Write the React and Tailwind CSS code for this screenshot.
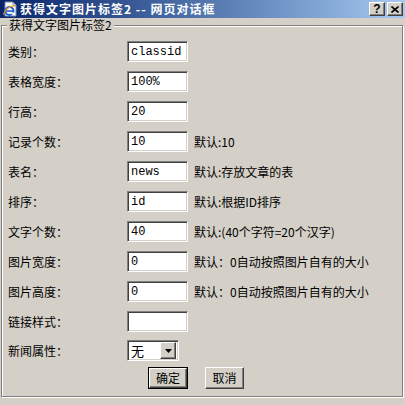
import React from "react";

const sunken =
  "bg-white border border-t-[#808080] border-l-[#808080] border-b-white border-r-white shadow-[inset_1px_1px_0_#404040,inset_-1px_-1px_0_#d4d0c8]";
const raised =
  "bg-[#d4d0c8] border border-t-white border-l-white border-b-[#404040] border-r-[#404040] shadow-[inset_-1px_-1px_0_#808080]";

function IeIcon() {
  return (
    <svg width="16" height="16" viewBox="0 0 16 16">
      <path d="M3 1h8l3 3v11H3z" fill="#fff" stroke="#7a8aa8" strokeWidth="1" />
      <path d="M11 1v3h3" fill="none" stroke="#7a8aa8" strokeWidth="1" />
      <circle cx="7.5" cy="10" r="4" fill="none" stroke="#1f5fd0" strokeWidth="2" />
      <path d="M4 10h7" stroke="#1f5fd0" strokeWidth="1.6" />
      <path d="M9.5 12.5h3" stroke="#fff" strokeWidth="2" />
      <path d="M1.5 13.5C3 8 9 4 13.5 5" fill="none" stroke="#e8a020" strokeWidth="1.2" />
    </svg>
  );
}

function TitleBar() {
  return (
    <div className="h-[18px] flex items-center bg-linear-to-r from-[#0a246a] to-[#a6caf0] pl-[2px] pr-[2px]">
      <IeIcon />
      <span className="ml-[2px] text-white font-bold text-[12px] leading-[14px] tracking-[1px] whitespace-nowrap">
        获得文字图片标签2 -- 网页对话框
      </span>
      <div className="ml-auto flex gap-[2px]">
        <div className={`${raised} w-[16px] h-[14px] flex items-center justify-center`}>
          <span className="font-bold text-[12px] leading-none font-['Liberation_Sans',sans-serif] text-black">?</span>
        </div>
        <div className={`${raised} w-[16px] h-[14px] flex items-center justify-center`}>
          <svg width="8" height="7" viewBox="0 0 8 7">
            <path d="M0.5 0.5L7.5 6.5M7.5 0.5L0.5 6.5" stroke="#000" strokeWidth="1.6" />
          </svg>
        </div>
      </div>
    </div>
  );
}

function Field({ value }) {
  return (
    <div
      className={`${sunken} w-[61px] h-[21px] flex items-center pl-[3px] font-['Liberation_Mono',monospace] text-[12px] leading-none text-black`}
    >
      {value}
    </div>
  );
}

const rows = [
  ["类别：", "classid", ""],
  ["表格宽度：", "100%", ""],
  ["行高：", "20", ""],
  ["记录个数：", "10", "默认:10"],
  ["表名：", "news", "默认:存放文章的表"],
  ["排序：", "id", "默认:根据ID排序"],
  ["文字个数：", "40", "默认:(40个字符=20个汉字)"],
  ["图片宽度：", "0", "默认：0自动按照图片自有的大小"],
  ["图片高度：", "0", "默认：0自动按照图片自有的大小"],
  ["链接样式：", "", ""],
];

export default function App() {
  return (
    <div className="w-[405px] h-[405px] bg-[#d4d0c8] font-['SimSun','Noto_Sans_CJK_SC',sans-serif] text-[12px] text-black overflow-hidden">
      <TitleBar />
      <div className="pt-[7px] pl-[1px]">
        <div className="relative w-[402px] h-[372px] border border-[#808080] shadow-[1px_1px_0_#fff,inset_1px_1px_0_#fff] pt-[15px] pl-[6px]">
          <span className="absolute left-[5px] -top-[8px] px-[2px] bg-[#d4d0c8] leading-[14px] whitespace-nowrap">
            获得文字图片标签2
          </span>
          <div className="flex flex-col gap-[9px]">
            {rows.map(([label, value, hint]) => (
              <div key={label} className="flex items-center h-[21px]">
                <div className="w-[119px] leading-[14px]">{label}</div>
                <Field value={value} />
                {hint && <div className="ml-[6px] leading-[14px] whitespace-nowrap">{hint}</div>}
              </div>
            ))}
            <div className="flex items-center h-[21px] -mt-[1px]">
              <div className="w-[119px] leading-[14px]">新闻属性：</div>
              <div className={`${sunken} w-[52px] h-[21px] flex items-center pl-[3px] pr-[2px]`}>
                <span className="leading-none text-[13px]">无</span>
                <div className={`${raised} ml-auto w-[16px] h-[17px] flex items-center justify-center`}>
                  <svg width="7" height="4" viewBox="0 0 7 4">
                    <path d="M0 0h7L3.5 4z" fill="#000" />
                  </svg>
                </div>
              </div>
            </div>
          </div>
          <div className="flex mt-[6px] ml-[140px] gap-[17px]">
            <div className="border border-black">
              <div className={`${raised} w-[38px] h-[20px] flex items-center justify-center leading-none`}>
                确定
              </div>
            </div>
            <div className={`${raised} w-[39px] h-[22px] flex items-center justify-center leading-none`}>
              取消
            </div>
          </div>
        </div>
      </div>
    </div>
  );
}
